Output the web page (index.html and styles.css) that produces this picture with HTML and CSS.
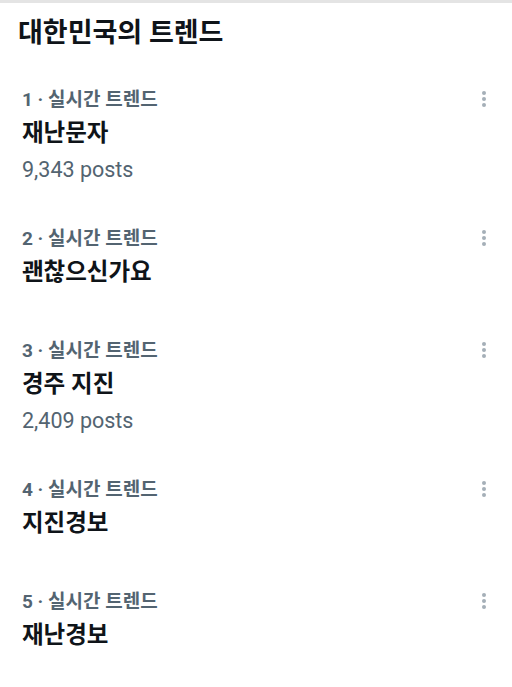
FILE: index.html
```html
<!DOCTYPE html>
<html lang="ko">
<head>
    <meta charset="UTF-8">
    <meta name="viewport" content="width=device-width, initial-scale=1.0">
    <title>대한민국의 트렌드</title>
    <link rel="stylesheet" href="styles.css">
</head>
<body>

<div id="trends">
    <h2 id="trends-title">대한민국의 트렌드</h2>

    <!-- Trend list -->
    <div class="trend">
        <div class="trend-text">
            <p class="trend-meta">1 · 실시간 트렌드</p>
            <p class="trend-name">재난문자</p>
            <p class="trend-posts">9,343 posts</p>
        </div>
        <div class="more-icon"><span></span><span></span><span></span></div>
    </div>

    <div class="trend">
        <div class="trend-text">
            <p class="trend-meta">2 · 실시간 트렌드</p>
            <p class="trend-name">괜찮으신가요</p>
        </div>
        <div class="more-icon"><span></span><span></span><span></span></div>
    </div>

    <div class="trend">
        <div class="trend-text">
            <p class="trend-meta">3 · 실시간 트렌드</p>
            <p class="trend-name">경주 지진</p>
            <p class="trend-posts">2,409 posts</p>
        </div>
        <div class="more-icon"><span></span><span></span><span></span></div>
    </div>

    <div class="trend">
        <div class="trend-text">
            <p class="trend-meta">4 · 실시간 트렌드</p>
            <p class="trend-name">지진경보</p>
        </div>
        <div class="more-icon"><span></span><span></span><span></span></div>
    </div>

    <div class="trend">
        <div class="trend-text">
            <p class="trend-meta">5 · 실시간 트렌드</p>
            <p class="trend-name">재난경보</p>
        </div>
        <div class="more-icon"><span></span><span></span><span></span></div>
    </div>
</div>

</body>
</html>
```

FILE: styles.css
```css
body {
    margin: 0;
    background-color: #ffffff;
    color: #0f1419;
    font-family: Roboto, "Noto Sans CJK KR", sans-serif;
}

#trends {
    border-top: 3px solid #e4e4e4;
    padding: 12px 0 0 22px;
}

#trends-title {
    font-size: 27px;
    font-weight: 700;
    margin: 0 0 36px -4px;
    line-height: 36px;
}

.trend {
    display: flex;
    justify-content: space-between;
    align-items: flex-start;
    padding-bottom: 50px;
}

.trend p {
    margin: 0; /* Remove default margin for paragraphs */
}

.trend-meta {
    color: #536471;
    font-size: 19px;
    font-weight: 700;
    line-height: 26px;
}

.trend .trend-name {
    font-size: 23.5px;
    font-weight: 700;
    line-height: 32px;
    margin-top: 4px;
}

.trend .trend-posts {
    color: #536471;
    font-size: 21.5px;
    line-height: 20px;
    margin-top: 11px;
    margin-bottom: -4px;
}

.more-icon {
    display: flex;
    flex-direction: column;
    gap: 2px;
    padding: 4px 26px 0 0;
}

.more-icon span {
    width: 4px;
    height: 4px;
    border-radius: 50%;
    background-color: #a5afb8;
}
```
